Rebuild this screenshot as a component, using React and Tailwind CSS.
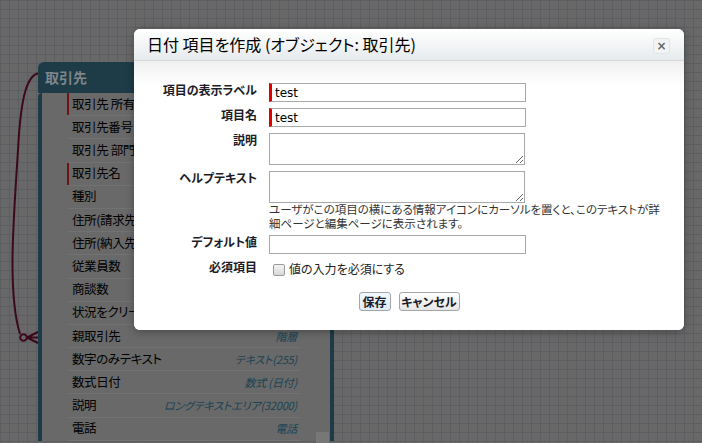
import React from 'react';

// types of rows 1-10 sit under the dialog and are not shown
const rows = [
  { name: '取引先 所有者', req: true },
  { name: '取引先番号' },
  { name: '取引先 部門' },
  { name: '取引先名', req: true },
  { name: '種別' },
  { name: '住所(請求先)' },
  { name: '住所(納入先)' },
  { name: '従業員数' },
  { name: '商談数' },
  { name: '状況をクリーン' },
  { name: '親取引先', type: '階層' },
  { name: '数字のみテキスト', type: 'テキスト(255)' },
  { name: '数式日付', type: '数式 (日付)' },
  { name: '説明', type: 'ロングテキストエリア(32000)' },
  { name: '電話', type: '電話' },
];

const font = "font-['Noto_Sans_CJK_JP','Noto_Sans',sans-serif] [font-feature-settings:'palt']";

function Label({ children }) {
  return (
    <div className="w-[123px] shrink-0 text-right text-[12px] leading-[14px] font-bold text-[#1c1c28]">
      {children}
    </div>
  );
}

function Field({ label, children, className = '' }) {
  return (
    <div className={`flex gap-3 ${className}`}>
      <Label>{label}</Label>
      <div>{children}</div>
    </div>
  );
}

function TextInput({ value, required }) {
  return (
    <input
      readOnly
      value={value}
      className={`block w-[257px] h-[19px] border border-[#a9a9a9] bg-white px-[3px] text-[12px] text-black outline-none font-['DejaVu_Sans',sans-serif] ${
        required ? 'border-l-[3px] border-l-[#e00000]' : ''
      }`}
    />
  );
}

function Card() {
  return (
    <div className="absolute left-[38px] top-[62px] w-[296px]">
      <div className="h-[31px] rounded-t-[6px] bg-[#1d3c48] px-[7px] text-[14px] leading-[31px] font-bold text-[#80868a]">
        取引先
      </div>
      <div className="relative border-x-4 border-[#1c3b47] bg-[#696969] rounded-tl-[4px] pl-[26px] pr-[30px]">
        {rows.map((r) => (
          <div
            key={r.name}
            className="relative flex h-[23.2px] items-center justify-between border-b border-[#727272] pl-[4px] pr-[3px]"
          >
            {r.req && <span className="absolute left-[-1px] top-0 h-[22px] w-[2px] bg-[#701216]" />}
            <span className="text-[12.5px] tracking-[-0.4px] text-black whitespace-nowrap">{r.name}</span>
            {r.type && (
              <span className="text-[11px] tracking-[-0.2px] italic text-[#1a4254] whitespace-nowrap">{r.type}</span>
            )}
          </div>
        ))}
        <span className="absolute right-[1px] top-[339px] h-[14px] w-[13px] bg-[#777]" />
      </div>
    </div>
  );
}

function Relation() {
  return (
    <svg className="absolute left-0 top-0" width="42" height="443" viewBox="0 0 42 443">
      <g fill="none" stroke="#3e081c" strokeWidth="2">
        <path d="M39 73 C 28 75, 21 92, 18 150 C 14 215, 7 292, 20 334" />
        <circle cx="23.5" cy="337.5" r="3.3" />
        <path d="M27 337.5 L38 332 M27 337.5 L38 337.5 M27 337.5 L38 343" />
      </g>
    </svg>
  );
}

function Modal() {
  return (
    <div className="absolute left-[134px] top-[29px] w-[550px] h-[301px] overflow-hidden rounded-[6px] bg-white shadow-[0_2px_8px_rgba(0,0,0,0.3)]">
      <div className="relative h-[32px] border-b border-[#d3d8db] bg-[linear-gradient(to_bottom,#ffffff,#e7ebed)] pl-[13px] text-[16px] leading-[31px] text-black">
        日付 項目を作成 (オブジェクト: 取引先)
        <button className="absolute right-[14px] top-[9px] flex h-[16px] w-[17px] items-center justify-center rounded-[3px] border border-[#e1e5e7] bg-[#f1f3f4] font-['DejaVu_Sans',sans-serif] text-[12px] leading-none font-bold text-[#666]">
          ×
        </button>
      </div>
      <div className="h-[269px] bg-[linear-gradient(to_bottom,#f0f0f0,#ffffff_24px)] pt-[22px]">
        <Field label="項目の表示ラベル" className="mb-[6px]">
          <TextInput value="test" required />
        </Field>
        <Field label="項目名" className="mb-[6px]">
          <TextInput value="test" required />
        </Field>
        <Field label="説明" className="mb-[6px]">
          <textarea readOnly className="block w-[256px] h-[32px] border border-[#a9a9a9] bg-white outline-none" />
        </Field>
        <Field label="ヘルプテキスト">
          <textarea readOnly className="block w-[256px] h-[32px] border border-[#a9a9a9] bg-white outline-none" />
        </Field>
        <div className="ml-[135px] mb-[5px] h-[27px] text-[11.5px] leading-[13.5px] text-[#333] whitespace-nowrap">
          ユーザがこの項目の横にある情報アイコンにカーソルを置くと、このテキストが詳
          <br />
          細ページと編集ページに表示されます。
        </div>
        <Field label="デフォルト値" className="mb-[6px]">
          <TextInput value="" />
        </Field>
        <Field label="必須項目" className="mb-[14px] h-[18px]">
          <div className="flex items-start">
            <span className="mt-[4px] ml-[4px] mr-[4px] block h-[12px] w-[12px] rounded-[2px] border border-[#9a9a9a] bg-[linear-gradient(to_bottom,#f4f4f4,#d9d9d9)]" />
            <span className="mt-[2px] text-[12px] leading-[14px] text-[#222]">値の入力を必須にする</span>
          </div>
        </Field>
        <div className="flex justify-center gap-2">
          <button className="h-[19px] w-[32px] whitespace-nowrap rounded-[3px] border border-[#a5a5a5] bg-[linear-gradient(to_bottom,#f4fafe,#dcecf8)] text-[12px] leading-[17px] font-bold text-[#1c1c28]">
            保存
          </button>
          <button className="h-[19px] w-[61px] whitespace-nowrap rounded-[3px] border border-[#a5a5a5] bg-[linear-gradient(to_bottom,#ffffff,#e6e6e6)] text-[12px] leading-[17px] font-bold text-[#1c1c28]">
            キャンセル
          </button>
        </div>
      </div>
    </div>
  );
}

export default function App() {
  return (
    <div
      className={`relative h-[443px] w-[702px] overflow-hidden bg-[#686868] bg-[linear-gradient(to_right,#5c5e61_1px,transparent_1px),linear-gradient(to_bottom,#5c5e61_1px,transparent_1px)] bg-[size:9px_9px] ${font}`}
    >
      <Relation />
      <Card />
      <Modal />
    </div>
  );
}
